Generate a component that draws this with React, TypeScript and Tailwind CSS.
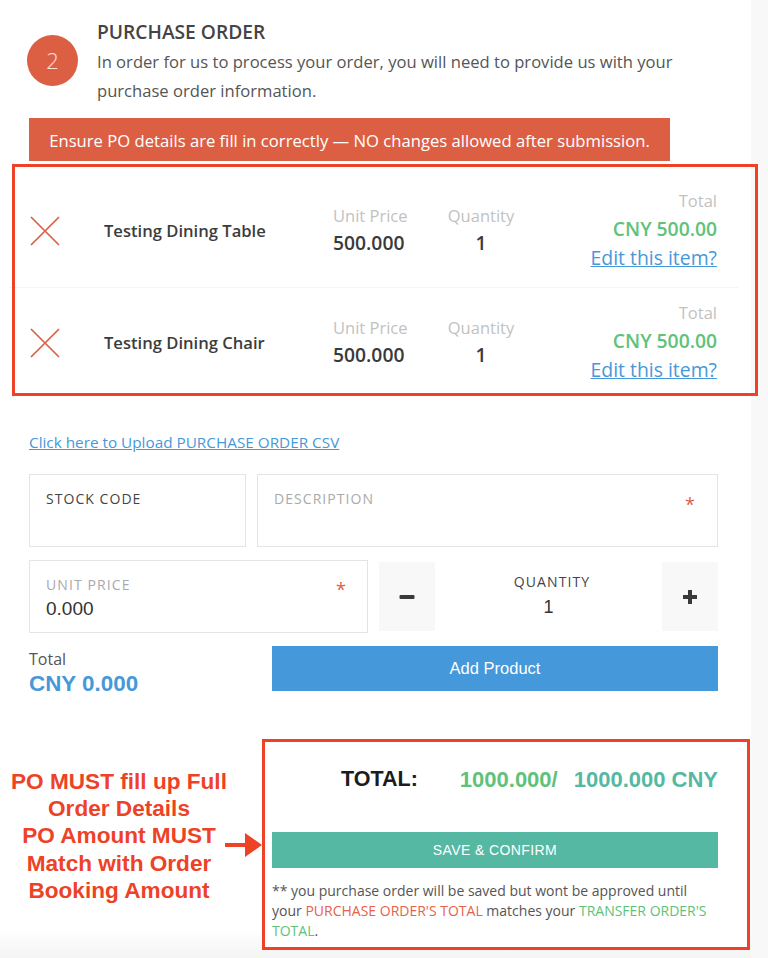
import React from 'react';

const open = "font-['Open_Sans',sans-serif]";
const arial = "font-['Liberation_Sans',Arial,sans-serif]";

function CrossIcon() {
  return (
    <svg width="30" height="30" viewBox="0 0 30 30" className="shrink-0" fill="none" stroke="#dd5f43" strokeWidth="1.7">
      <path d="M1 1 L29 29 M29 1 L1 29" />
    </svg>
  );
}

function OrderRow({ name, first }: { name: string; first?: boolean }) {
  return (
    <div className={`flex ${first ? 'h-[113px] border-b border-[#f4f4f4]' : 'h-[112px]'}`}>
      <div className="w-[95px] pl-[21px] flex items-center"><CrossIcon /></div>
      <div className="w-[229px] flex items-center text-[16.6px] font-semibold text-[#3c3c3c]">{name}</div>
      <div className="w-[115px] pt-[29px]">
        <div className="text-[16.5px] leading-[24px] text-[#c2c2c2]">Unit Price</div>
        <div className="text-[19.3px] leading-[30px] font-semibold text-[#3a3a3a]">500.000</div>
      </div>
      <div className="w-[66px] pt-[29px] flex flex-col items-center">
        <div className="text-[16.5px] leading-[24px] text-[#c2c2c2] whitespace-nowrap">Quantity</div>
        <div className="text-[19.3px] leading-[30px] font-semibold text-[#3a3a3a]">1</div>
      </div>
      <div className="w-[203px] pt-[14px] flex flex-col items-end">
        <div className="text-[16.5px] leading-[24px] text-[#c2c2c2]">Total</div>
        <div className="text-[19.3px] leading-[31px] font-semibold text-[#5ec27a]">CNY 500.00</div>
        <a className="text-[19.4px] leading-[28px] text-[#4698d9] underline">Edit this item?</a>
      </div>
    </div>
  );
}

export default function App() {
  return (
    <div className={`${open} w-[768px] h-[958px] overflow-hidden bg-[#f8f8f8]`}>
      <div className="w-[751px] h-[958px] bg-white bg-gradient-to-b from-white from-[97%] to-[#f4f4f4]">
        <div className="flex pl-[27px] pt-[19px] h-[118px]">
          <div className="w-[51px] h-[51px] mt-[16px] rounded-full bg-[#dd5f43] text-white/80 font-light text-[22px] flex items-center justify-center shrink-0">2</div>
          <div className="ml-[19px]">
            <h1 className="text-[19.2px] leading-[25px] font-semibold text-[#444]">PURCHASE ORDER</h1>
            <p className="text-[16.6px] leading-[29px] text-[#555] mt-[3px] w-[600px]">In order for us to process your order, you will need to provide us with your purchase order information.</p>
          </div>
        </div>

        <div className="ml-[29px] w-[641px] h-[43px] pt-[3px] bg-[#dd5f43] text-white text-[16.65px] flex items-center justify-center">
          Ensure PO details are fill in correctly — NO changes allowed after submission.
        </div>

        <div className="relative ml-[9px] w-[729px] mt-[14px]">
          <OrderRow name="Testing Dining Table" first />
          <div className="-mt-[1px]"><OrderRow name="Testing Dining Chair" /></div>
          <div className="absolute left-[3px] right-[-20px] top-[-11px] h-[232px] border-[3px] border-[#ee4226]" />
        </div>

        <div className="pl-[29px] pr-[33px]">
          <a className="block mt-[33px] text-[15.3px] leading-[20px] text-[#4698d9] underline">Click here to Upload PURCHASE ORDER CSV</a>

          <div className="flex gap-[11px] mt-[22px]">
            <div className="w-[217px] h-[73px] border border-[#e4e4e4] pl-[16px] pt-[14px] text-[14px] leading-[20px] tracking-[1.05px] text-[#444]">STOCK CODE</div>
            <div className="relative flex-1 h-[73px] border border-[#e4e4e4] pl-[16px] pt-[14px] text-[14px] leading-[20px] tracking-[1.05px] text-[#aaa]">
              DESCRIPTION
              <span className="absolute right-[21px] top-[19px] text-[#dd5f43] text-[18px] leading-[20px]">*</span>
            </div>
          </div>

          <div className="flex mt-[13px] h-[73px]">
            <div className="relative w-[339px] h-[73px] border border-[#e4e4e4] pl-[16px] pt-[15px]">
              <div className="text-[14px] leading-[18px] tracking-[1.1px] text-[#aaa]">UNIT PRICE</div>
              <div className={`${arial} text-[19px] leading-[24px] mt-[3px] text-[#333]`}>0.000</div>
              <span className="absolute right-[21px] top-[18px] text-[#dd5f43] text-[18px] leading-[20px]">*</span>
            </div>
            <button className={`${arial} w-[56px] h-[69px] ml-[11px] mt-[2px] bg-[#f8f8f8] flex items-center justify-center`}>
              <svg width="16" height="16" viewBox="0 0 16 16"><rect x="0.5" y="6" width="15" height="4" rx="1" fill="#3a3a3a" /></svg>
            </button>
            <div className="flex-1 flex flex-col items-center pt-[12px] text-[#444]">
              <div className="text-[14px] leading-[20px] tracking-[1.1px] pl-[7px]">QUANTITY</div>
              <div className={`${arial} text-[18px] leading-[30px] text-[#333]`}>1</div>
            </div>
            <button className="w-[56px] h-[69px] mt-[2px] bg-[#f8f8f8] flex items-center justify-center">
              <svg width="16" height="16" viewBox="0 0 16 16"><path d="M6 1h4v5h5v4h-5v5H6v-5H1V6h5z" fill="#3a3a3a" /></svg>
            </button>
          </div>

          <div className="flex justify-between mt-[13px]">
            <div>
              <div className="text-[16px] leading-[22px] text-[#555] mt-[2px]">Total</div>
              <div className={`${arial} text-[22.4px] leading-[28px] font-bold text-[#4698d9]`}>CNY 0.000</div>
            </div>
            <button className={`${arial} w-[446px] h-[45px] bg-[#4598da] text-white text-[16.5px]`}>Add Product</button>
          </div>
        </div>

        <div className="flex mt-[41px]">
          <div className="relative w-[262px] shrink-0">
            <div className={`${arial} w-[238px] pt-[29px] text-center text-[22.6px] leading-[27.2px] font-bold text-[#ee4226] whitespace-nowrap`}>
              <div>PO MUST fill up Full</div>
              <div>Order Details</div>
              <div>PO Amount MUST</div>
              <div>Match with Order</div>
              <div>Booking Amount</div>
            </div>
            <svg className="absolute left-[225px] top-[93px]" width="38" height="26" viewBox="0 0 38 26">
              <path d="M0 11h20V1l17 12-17 12V15H0z" fill="#ee4226" />
            </svg>
          </div>
          <div className="w-[488px] h-[211px] border-[3px] border-[#ee4226] pl-[7px] pr-[30px] bg-white">
            <div className={`${arial} flex items-center h-[75px] text-[22px] font-bold pl-[69px] whitespace-nowrap`}>
              <span className="text-[#1c1c1c] text-[21.5px]">TOTAL:</span>
              <span className="ml-[42px] text-[#5ec27a]">1000.000/</span>
              <span className="ml-[16px] text-[#55b8a2]">1000.000 CNY</span>
            </div>
            <button className={`${arial} block w-[446px] h-[36px] mt-[15px] bg-[#55b8a2] text-white text-[14px] tracking-[0.4px]`}>SAVE &amp; CONFIRM</button>
            <p className="mt-[13px] text-[14px] leading-[20px] text-[#555] w-[446px]">
              ** you purchase order will be saved but wont be approved until your <span className="text-[#e8604a]">PURCHASE ORDER'S TOTAL</span> matches your <span className="text-[#5ec27a]">TRANSFER ORDER'S TOTAL</span>.
            </p>
          </div>
        </div>
      </div>
    </div>
  );
}
